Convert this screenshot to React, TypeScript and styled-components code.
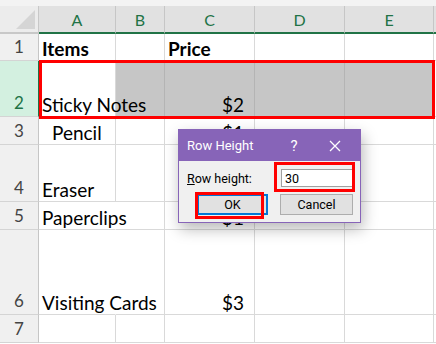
import React from 'react';
import styled, { createGlobalStyle } from 'styled-components';

const Global = createGlobalStyle`
  html, body { margin: 0; padding: 0; background: #fff; }
  body { width: 436px; height: 344px; overflow: hidden; }
  * { box-sizing: border-box; }
`;

const Sheet = styled.div`
  position: relative;
  width: 436px;
  height: 344px;
  overflow: hidden;
  background: #fff;
  font-family: Lato, "Liberation Sans", sans-serif;
`;

const TopStrip = styled.div`
  height: 6px;
  background: #f3f3f3;
`;

const Grid = styled.div`
  display: grid;
  grid-template-columns: 39px 77px 49px 90px 90px 89px 1fr;
  grid-template-rows: 28px 27px 56px 28px 57px 28px 85px 28px;
`;

const Corner = styled.div`
  background: #ececec;
  border-right: 1px solid #c8c8c8;
  border-bottom: 2px solid #c8c8c8;
  display: flex;
  align-items: flex-end;
  justify-content: flex-end;
  padding: 0 3px 3px 0;
`;

const ColHead = styled.div`
  background: #e1e1e1;
  border-right: 1px solid #c6c6c6;
  border-bottom: 2px solid #217346;
  color: #217346;
  font-size: 16px;
  display: flex;
  align-items: center;
  justify-content: center;
  padding-top: 1px;
`;

const RowHead = styled.div<{ $sel?: boolean }>`
  background: ${p => (p.$sel ? '#d3f0e0' : '#f0f0f0')};
  border-right: 1px solid ${p => (p.$sel ? '#217346' : '#c6c6c6')};
  border-bottom: 1px solid #d4d4d4;
  color: ${p => (p.$sel ? '#217346' : '#444')};
  font-size: 17px;
  display: flex;
  align-items: flex-end;
  justify-content: center;
  padding-bottom: 3px;
`;

const Cell = styled.div<{
  $sel?: boolean;
  $right?: boolean;
  $bold?: boolean;
  $indent?: boolean;
  $spill?: boolean;
  $noLine?: boolean;
}>`
  position: relative;
  z-index: ${p => (p.$spill ? 1 : 0)};
  background: ${p => (p.$sel ? '#c6c6c6' : '#fff')};
  border-right: 1px solid
    ${p => (p.$noLine ? '#fff' : p.$sel ? '#b4b4b4' : '#d9d9d9')};
  border-bottom: 1px solid #d9d9d9;
  font-size: 19px;
  font-weight: ${p => (p.$bold ? 700 : 400)};
  color: #000;
  display: flex;
  align-items: flex-end;
  justify-content: ${p => (p.$right ? 'flex-end' : 'flex-start')};
  padding: 0 ${p => (p.$right ? '10px' : '2px')} 2px ${p => (p.$indent ? '13px' : '3px')};
  white-space: nowrap;
  overflow: visible;
  line-height: 1;
`;

const Filler = styled.div`
  background: #fff;
  border-bottom: 1px solid #d9d9d9;
`;

const HeadFiller = styled.div`
  background: #e1e1e1;
  border-bottom: 2px solid #217346;
`;

const Mark = styled.div<{ $l: number; $t: number; $w: number; $h: number }>`
  position: absolute;
  left: ${p => p.$l}px;
  top: ${p => p.$t}px;
  width: ${p => p.$w}px;
  height: ${p => p.$h}px;
  border: 3px solid #ff0000;
  pointer-events: none;
  z-index: 5;
`;

const Dialog = styled.div`
  position: absolute;
  left: 178px;
  top: 129px;
  width: 183px;
  height: 94px;
  border: 1px solid #8764b8;
  background: #f0f0f0;
  box-shadow: 2px 6px 14px rgba(0, 0, 0, 0.28);
  display: flex;
  flex-direction: column;
  font-family: Roboto, "Noto Sans", sans-serif;
  z-index: 3;
`;

const TitleBar = styled.div`
  height: 31px;
  background: #8764b8;
  color: #fff;
  display: flex;
  align-items: center;
  padding: 0 4px 0 8px;
  font-size: 13px;
`;

const Title = styled.span`
  flex: 1;
`;

const TitleBtn = styled.span<{ $w: number }>`
  width: ${p => p.$w}px;
  display: flex;
  justify-content: center;
  align-items: center;
  font-size: 15px;
`;

const Body = styled.div`
  flex: 1;
  padding: 8px 8px 0 8px;
  display: flex;
  flex-direction: column;
`;

const FieldRow = styled.div`
  display: flex;
  align-items: center;
  justify-content: space-between;
  height: 18px;
  font-size: 12.5px;
  color: #000;
`;

const Label = styled.span`
  u { text-decoration: underline; }
`;

const Input = styled.div`
  width: 72px;
  height: 18px;
  background: #fff;
  border: 1px solid #a0a0a0;
  font-size: 12.5px;
  display: flex;
  align-items: center;
  padding-left: 3px;
  margin-right: -1px;
`;

const ButtonRow = styled.div`
  display: flex;
  justify-content: space-between;
  margin-top: 7px;
  padding-left: 10px;
`;

const Button = styled.div<{ $focus?: boolean; $w: number }>`
  width: ${p => p.$w}px;
  height: 21px;
  background: #e1e1e1;
  border: ${p => (p.$focus ? '2px solid #0078d7' : '1px solid #adadad')};
  font-size: 12.5px;
  display: flex;
  align-items: center;
  justify-content: center;
  color: #000;
  margin-right: ${p => (p.$focus ? 0 : -1)}px;
`;

const cols = ['A', 'B', 'C', 'D', 'E'];

type Row = {
  n: number;
  a: string;
  c: string;
  bold?: boolean;
  indent?: boolean;
  sel?: boolean;
  spill?: boolean;
  noLine?: boolean;
};

const rows: Row[] = [
  { n: 1, a: 'Items', c: 'Price', bold: true },
  { n: 2, a: 'Sticky Notes', c: '$2', sel: true, spill: true },
  { n: 3, a: 'Pencil', c: '$1', indent: true },
  { n: 4, a: 'Eraser', c: '$1' },
  { n: 5, a: 'Paperclips', c: '$1', spill: true, noLine: true },
  { n: 6, a: 'Visiting Cards', c: '$3', spill: true, noLine: true },
  { n: 7, a: '', c: '' },
];

export default function App() {
  return (
    <Sheet>
      <Global />
      <TopStrip />
      <Grid>
        <Corner>
          <svg width="19" height="19" viewBox="0 0 19 19">
            <polygon points="19,0 19,19 0,19" fill="#d5d5d5" />
          </svg>
        </Corner>
        {cols.map(c => (
          <ColHead key={c}>{c}</ColHead>
        ))}
        <HeadFiller />
        {rows.map(r => (
          <React.Fragment key={r.n}>
            <RowHead $sel={r.sel}>{r.n}</RowHead>
            <Cell $bold={r.bold} $indent={r.indent} $spill={r.spill} $noLine={r.noLine}>
              {r.a}
            </Cell>
            <Cell $sel={r.sel} />
            <Cell $sel={r.sel} $bold={r.bold} $right={!r.bold}>
              {r.c}
            </Cell>
            <Cell $sel={r.sel} />
            <Cell $sel={r.sel} />
            <Filler />
          </React.Fragment>
        ))}
      </Grid>

      <Mark $l={39} $t={60} $w={396} $h={59} />

      <Dialog>
        <TitleBar>
          <Title>Row Height</Title>
          <TitleBtn $w={40}>?</TitleBtn>
          <TitleBtn $w={42}>
            <svg width="12" height="12" viewBox="0 0 12 12">
              <path d="M1 1 L11 11 M11 1 L1 11" stroke="#fff" strokeWidth="1.3" />
            </svg>
          </TitleBtn>
        </TitleBar>
        <Body>
          <FieldRow>
            <Label>
              <u>R</u>ow height:
            </Label>
            <Input>30</Input>
          </FieldRow>
          <ButtonRow>
            <Button $focus $w={71}>
              OK
            </Button>
            <Button $w={73}>Cancel</Button>
          </ButtonRow>
        </Body>
      </Dialog>

      <Mark $l={274} $t={162} $w={81} $h={30} />
      <Mark $l={195} $t={192} $w={69} $h={27} />
    </Sheet>
  );
}
